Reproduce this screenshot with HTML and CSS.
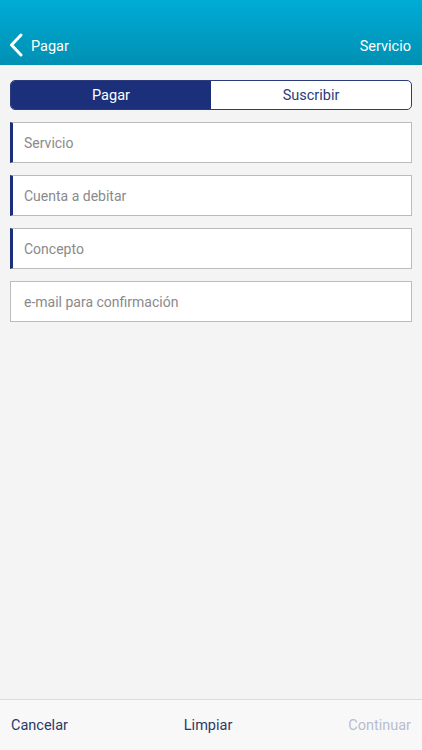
FILE: index.html
```html
<!DOCTYPE html>
<html lang="es">
<head>
    <meta charset="UTF-8">
    <meta name="viewport" content="width=device-width, initial-scale=1.0">
    <title>Pagar</title>
    <link rel="stylesheet" href="styles.css">
</head>
<body>
    <header class="top-bar">
        <a class="back" href="#">
            <svg width="14" height="24" viewBox="0 0 14 24">
                <path d="M12 2 L2.5 12 L12 22" fill="none" stroke="#fff" stroke-width="3" stroke-linecap="round" stroke-linejoin="round"/>
            </svg>
            <span>Pagar</span>
        </a>
        <span class="title">Servicio</span>
    </header>

    <main class="content">
        <div class="segmented">
            <button class="active">Pagar</button>
            <button>Suscribir</button>
        </div>

        <div class="field required">Servicio</div>
        <div class="field required">Cuenta a debitar</div>
        <div class="field required">Concepto</div>
        <div class="field">e-mail para confirmación</div>
    </main>

    <footer class="bottom-bar">
        <span>Cancelar</span>
        <span>Limpiar</span>
        <span class="disabled">Continuar</span>
    </footer>
</body>
</html>
```

FILE: styles.css
```css
html, body {
    height: 100%;
}

body {
    margin: 0;
    font-family: Roboto, "Liberation Sans", sans-serif;
    background-color: #f4f4f4;
    display: flex;
    flex-direction: column;
}

.top-bar {
    height: 65px;
    box-sizing: border-box;
    padding: 0 11px 8px 9px;
    display: flex;
    align-items: flex-end;
    justify-content: space-between;
    background: linear-gradient(#00acd6, #0090b3);
    color: #fff;
    font-size: 14.5px;
}

.back {
    display: flex;
    align-items: center;
    gap: 8px;
    color: #fff;
    text-decoration: none;
}

.back span {
    padding-top: 2px;
}

.title {
    padding-bottom: 2px;
}

.content {
    flex: 1;
    padding: 15px 10px 0 10px;
    display: flex;
    flex-direction: column;
    gap: 12px;
}

.segmented {
    display: flex;
    height: 28px;
    border: 1px solid #2b3b7d;
    border-radius: 5px;
    overflow: hidden;
    background-color: #fff;
}

.segmented button {
    flex: 1;
    border: none;
    background: none;
    font-family: inherit;
    font-size: 14.5px;
    color: #2b3b7d;
}

.segmented .active {
    background-color: #1b2f7a;
    color: #fff;
}

.field {
    height: 41px;
    box-sizing: border-box;
    display: flex;
    align-items: center;
    padding-left: 13px;
    background-color: #fff;
    border: 1px solid #bcbcbc;
    color: #8a8a8a;
    font-size: 14px;
}

.field.required {
    border-left: 3px solid #1b2f7a;
    padding-left: 11px;
}

.bottom-bar {
    height: 50px;
    display: flex;
    align-items: center;
    justify-content: space-between;
    padding: 0 11px 0 11px;
    border-top: 1px solid #dcdcdc;
    background-color: #f8f8f8;
    color: #2c3868;
    font-size: 14.5px;
}

.bottom-bar .disabled {
    color: #b9bdcf;
}
```
